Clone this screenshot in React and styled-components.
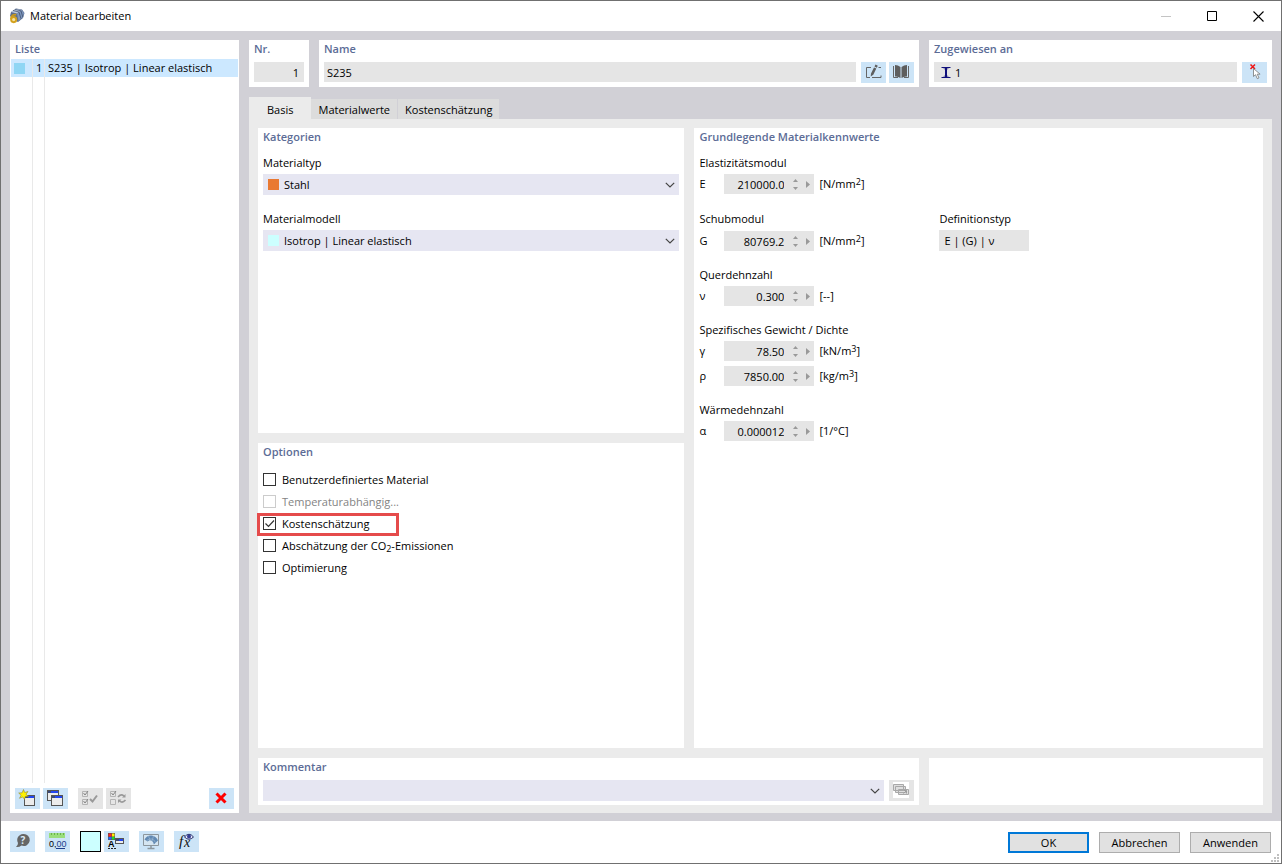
import { useState } from "react";
import styled, { createGlobalStyle, css } from "styled-components";

const GlobalStyle = createGlobalStyle`
  *, *::after {
    box-sizing: border-box;
  }

  body {
    margin: 0;
    font-family: "Open Sans", "Noto Sans", sans-serif;
    font-size: 11px;
    line-height: 16px;
    color: #000;
  }

  button, input, select {
    margin: 0;
    padding: 0;
    border: 0;
    border-radius: 0;
    background: none;
    color: inherit;
    font: inherit;
  }
`;

const Window = styled.div`
  position: relative;
  display: flex;
  flex-direction: column;
  min-height: 100vh;
  border: 1px solid #707070;
  background: #fff;
`;

const TitleBar = styled.header`
  display: flex;
  align-items: center;
  gap: 5px;
  height: 30px;
  padding-left: 8px;
`;

const Title = styled.h1`
  flex: 1;
  margin: 0;
  font-size: 11px;
  font-weight: 400;
`;

const WindowButtons = styled.div`
  display: flex;
`;

const WindowButton = styled.button`
  display: flex;
  align-items: center;
  justify-content: center;
  width: 46px;
  height: 30px;
`;

const Body = styled.div`
  flex: 1;
  display: flex;
  gap: 10px;
  padding: 9px 9px 8px;
  background: #d1d0d6;
`;

const Heading = styled.h2`
  margin: 0;
  font-size: 11px;
  font-weight: 600;
  line-height: 18px;
  color: #5c6c96;
`;

const ListPanel = styled.aside`
  display: flex;
  flex-direction: column;
  flex: 0 0 229px;
  padding-bottom: 4px;
  background: #fff;

  ${Heading} {
    padding: 0 5px;
  }
`;

const List = styled.div`
  flex: 1;
  display: flex;
  flex-direction: column;
  margin: 1px 1px 5px;
`;

const ListRow = styled.div`
  display: grid;
  grid-template-columns: 22px 12px 1fr;
  min-height: 18px;
  background: ${(p) => (p.$selected ? "#cce8ff" : "transparent")};
  ${(p) => p.$fill && "flex: 1;"}
`;

const ListCell = styled.div`
  display: flex;
  align-items: center;
  padding-left: 3px;
  line-height: 18px;

  &:not(:last-child) {
    border-right: 1px solid #e9e9e9;
  }
`;

const Swatch = styled.span`
  flex: none;
  width: 11px;
  height: 11px;
  background: ${(p) => p.$color};
`;

const ListTools = styled.div`
  display: flex;
  gap: 3px;
  padding: 0 5px;
`;

const ToolGroup = styled.div`
  display: flex;
  gap: 3px;
  margin-right: 7px;

  &:last-child {
    margin: 0 0 0 auto;
  }
`;

const ToolButton = styled.button`
  flex: none;
  width: 25px;
  height: 21px;
  background: #cce4f7;

  &:disabled {
    background: #e5e5e5;
  }

  svg {
    display: block;
  }
`;

const Main = styled.main`
  flex: 1;
  display: flex;
  flex-direction: column;
  min-width: 0;
`;

const TopRow = styled.div`
  display: grid;
  grid-template-columns: 60px 1fr 343px;
  gap: 10px;
  margin-bottom: 10px;
`;

const Card = styled.section`
  padding: 0 5px 4px;
  background: #fff;
`;

const CardLine = styled.div`
  display: flex;
  align-items: flex-start;
  gap: 5px;
  min-height: 21px;
  margin-top: 4px;
`;

const ButtonPair = styled.div`
  display: flex;
  gap: 3px;
`;

const TextField = styled.div`
  flex: 1;
  display: flex;
  align-items: center;
  gap: 4px;
  min-width: 0;
  height: 20px;
  padding: 0 ${(p) => p.$pad || 3}px;
  background: #e5e5e5;

  input {
    flex: 1;
    min-width: 0;
    height: 20px;
    padding-top: 1px;
    text-align: ${(p) => p.$align || "left"};
  }
`;

const Tabs = styled.div`
  display: flex;
  align-items: flex-end;
  height: 22px;
`;

const Tab = styled.button`
  height: 20px;
  padding: 2px 7px 0;
  background: #dcdcdc;
  line-height: 18px;

  & + & {
    border-right: 1px solid #d1d0d6;
  }

  ${(p) =>
    p.$active &&
    css`
      height: 22px;
      padding: 4px 18px 0;
      background: #ebebeb;
    `}
`;

const TabPage = styled.div`
  flex: 1;
  display: flex;
  flex-direction: column;
  gap: 10px;
  padding: 9px 9px 8px;
  background: #ebebeb;
`;

const Columns = styled.div`
  flex: 1;
  display: grid;
  grid-template-columns: 3fr 4fr;
  gap: 10px;
`;

const LeftColumn = styled.div`
  display: grid;
  grid-template-rows: 1fr 1fr;
  gap: 10px;
  min-width: 0;
`;

const BottomRow = styled.div`
  display: grid;
  grid-template-columns: 1fr 334px;
  gap: 10px;
`;

const Groups = styled.div`
  display: flex;
  flex-direction: column;
  gap: 16px;
  margin-top: 9px;
`;

const Group = styled.div`
  min-width: 0;
`;

const GroupLabel = styled.label`
  display: block;
  margin-bottom: 3px;
`;

const SelectBox = styled.div`
  flex: 1;
  display: flex;
  align-items: center;
  gap: 5px;
  height: 21px;
  padding: 0 4px 0 5px;
  background: #e6e6f2;

  select {
    flex: 1;
    min-width: 0;
    height: 21px;
    appearance: none;
    outline: none;
  }

  svg {
    flex: none;
  }
`;

const SplitGroup = styled.div`
  display: grid;
  grid-template-columns: 240px 90px;
`;

const TypeField = styled.input`
  display: block;
  width: 90px;
  height: 21px;
  padding: 0 5px;
  background: #e5e5e5;
`;

const ValueRows = styled.div`
  display: flex;
  flex-direction: column;
  gap: 5px;
`;

const ValueRow = styled.div`
  display: grid;
  grid-template-columns: 25px 90px 1fr;
  align-items: ${(p) => p.$align || "end"};
  min-height: ${(p) => (p.$tall ? 21 : 20)}px;
  line-height: 20px;
`;

const ValueBox = styled.div`
  display: flex;
  height: 20px;
  background: #e5e5e5;

  input {
    flex: 1;
    min-width: 0;
    padding-top: 2px;
    text-align: right;
  }
`;

const Spinner = styled.div`
  display: flex;
  flex-direction: column;
  justify-content: center;
  gap: 5px;
  width: 13px;
  margin-left: 5px;
`;

const ArrowButton = styled.button`
  display: flex;
  align-items: center;
  justify-content: center;
`;

const MoreButton = styled(ArrowButton)`
  width: 12px;
`;

const Unit = styled.span`
  padding-left: 5px;
  white-space: nowrap;

  sup {
    font-size: 9px;
    line-height: 0;
    vertical-align: 3px;
  }
`;

const Options = styled.div`
  display: flex;
  flex-direction: column;
  align-items: flex-start;
  margin-top: 8px;
`;

const Option = styled.label`
  position: relative;
  display: flex;
  align-items: center;
  gap: 6px;
  height: 22px;
  padding-bottom: 1px;
  color: ${(p) => (p.$disabled ? "#838383" : "#000")};

  sub {
    font-size: 9px;
    line-height: 0;
    vertical-align: -2px;
  }

  ${(p) =>
    p.$marked &&
    css`
      &::after {
        content: "";
        position: absolute;
        top: 0;
        left: -6px;
        width: 142px;
        height: 23px;
        border: 3px solid #e54b4b;
        pointer-events: none;
      }
    `}
`;

const CheckSlot = styled.span`
  display: grid;

  > * {
    grid-area: 1 / 1;
  }

  svg {
    pointer-events: none;
  }
`;

const CheckInput = styled.input`
  width: 13px;
  height: 13px;
  appearance: none;
  border: 1px solid #333;
  background: #fff;

  &:disabled {
    border-color: #ccc;
  }
`;

const Footer = styled.footer`
  display: flex;
  align-items: flex-start;
  gap: 10px;
  height: 42px;
  padding: 10px 10px 0 9px;
`;

const ColorButton = styled.button`
  width: 21px;
  height: 21px;
  border: 1px solid #000;
  background: #ccffff;
`;

const Actions = styled.div`
  display: flex;
  gap: 10px;
  margin: 1px 0 0 auto;
`;

const ActionButton = styled.button`
  width: 81px;
  height: 21px;
  border: ${(p) => (p.$primary ? "2px solid #0078d7" : "1px solid #adadad")};
  background: #e1e1e1;
`;

const Grip = styled.svg`
  position: absolute;
  right: 2px;
  bottom: 1px;
`;

function AppIcon() {
  return (
    <svg width="16" height="16" viewBox="0 0 16 16">
      <path d="M2 4 7 0.5 13 1.5 15.5 5 14 10 9 14 5 12 1 8Z" fill="#5a6d90" />
      <path d="M2 4 7 .8 12.5 2 8 5.5Z" fill="#bccbe2" />
      <path d="M8 5.5 12.5 2 15 5 13.5 9.5 9.5 13Z" fill="#7f97be" />
      <path d="M4 2.5 10 4M6 1.3l6 1.6M10 4.2l2 6.5M12 3l1.8 6" stroke="#34435f" fill="none" strokeWidth=".7" />
      <path d="M7.300 6.600Q2.200 6 2 11" stroke="#c99a1c" strokeWidth="1.800" fill="none" />
      <circle cx="4.700" cy="11.600" r="2.600" fill="#f3e3a4" stroke="#d3a11d" strokeWidth="1.900" />
    </svg>
  );
}

function Icon({ children }) {
  return (
    <svg width="25" height="21" viewBox="0 0 25 21" fill="none">
      {children}
    </svg>
  );
}

function MiniWindow({ x, y, w = 11, h = 10 }) {
  return (
    <>
      <rect x={x + 0.5} y={y + 0.5} width={w - 1} height={h - 1} fill="#ececec" stroke="#555" />
      <rect x={x + 1} y={y + 1} width={w - 2} height="2" fill="#3a4a78" />
      <rect x={x + 4} y={y + 1} width={w - 5} height="2" fill="#2346f0" />
    </>
  );
}

const NewIcon = () => (
  <Icon>
    <MiniWindow x={9} y={7} w={11} h={11} />
    <path
      d="m8.500 1.500 1.200 3 3.300-1-2 2.800 2.500 2-3.200.1-.8 3-1.800-2.500-3.200 1.400 1.600-3L3.700 5l3.400-.2Z"
      fill="#fff200"
      stroke="#8c8636"
      strokeWidth=".6"
    />
  </Icon>
);

const CopyIcon = () => (
  <Icon>
    <MiniWindow x={4} y={2} w={12} h={11} />
    <MiniWindow x={8} y={7} w={12} h={11} />
  </Icon>
);

const CheckAllIcon = () => (
  <Icon>
    <path d="M4.500 3.500h5v5h-5zM4.500 11.500h5v5h-5z" stroke="#b4b4b4" />
    <path d="m5.500 5 1.500 2 3-4M5.500 13l1.500 2 3-4" stroke="#858585" />
    <path d="m12 11 2.500 2.500 4.500-6" stroke="#999" strokeWidth="2" />
  </Icon>
);

const SwapIcon = () => (
  <Icon>
    <path d="M4.500 3.500h5v5h-5zM4.500 11.500h5v5h-5z" stroke="#b4b4b4" />
    <path d="m5.500 5 1.500 2 3-4" stroke="#858585" />
    <path d="M12 9q3-3.500 6-1M19.500 12q-3 3.500-6 1" stroke="#999" strokeWidth="1.600" />
    <path d="M19.500 6v3.500H16zM12 15v-3.500h3.500z" fill="#999" />
  </Icon>
);

const DeleteIcon = () => (
  <Icon>
    <path d="m7.500 5.500 9 9M16.500 5.500l-9 9" stroke="#f00" strokeWidth="3" />
  </Icon>
);

const HelpIcon = () => (
  <Icon>
    <path d="M13 3a6 6 0 1 1-1.500 11.500Q9 16.500 6 16q2-1.500 2-4A6 6 0 0 1 13 3Z" fill="#666" />
    <text x="13" y="13" textAnchor="middle" fontSize="10" fontWeight="700" fill="#dcecf8">?</text>
  </Icon>
);

const UnitsIcon = () => (
  <Icon>
    <path d="M4 2h16v5H4z" fill="#9ade7c" />
    <path d="M6.500 2v2M9.500 2v2M12.500 2v2M15.500 2v2M18.500 2v2" stroke="#69b34b" />
    <text x="4" y="16" fontFamily="Liberation Sans" fontSize="9" fill="#000">
      0,<tspan fill="#1d3e8a">00</tspan>
    </text>
    <path d="M11 17.500h9" stroke="#1d3e8a" />
  </Icon>
);

const DisplayIcon = () => (
  <Icon>
    <path d="M4 2h7v7H4z" fill="#555" />
    <path d="M4.500 2.500h3v3h-3z" fill="#f22" />
    <path d="M8 2.500h2.500v3H8z" fill="#fe0" />
    <path d="M4.500 6h3v2.500h-3z" fill="#26f" />
    <path d="M8 6h2.500v2.500H8z" fill="#2d2" />
    <text x="4" y="16" fontFamily="Liberation Sans" fontSize="9" fontWeight="700" fill="#000">A</text>
    <path d="M4 17.500h8" stroke="#222" strokeDasharray="2 1" />
    <MiniWindow x={11} y={7} w={9} h={6} />
  </Icon>
);

const MonitorIcon = () => (
  <Icon>
    <path d="M4.500 3.500h15v11h-15z" fill="#d5e5f1" stroke="#8c969d" />
    <path d="M12 15v2.500M8.500 17.500h7" stroke="#8c969d" strokeWidth="1.500" />
    <path d="M5.500 8.500Q8 4 12.500 4.500T19 9.500L14.800 13.500Q14.500 9.500 10.500 9.300L8.500 10.500Z" fill="#6189b3" />
    <path d="M7.500 9.500Q14 5.500 16.500 11.500M9.500 5l1.500 4M14.500 5l-1.500 5" stroke="#a4bfd9" strokeWidth=".6" />
  </Icon>
);

const FormulaIcon = () => (
  <Icon>
    <text x="5" y="15" fontFamily="Liberation Serif" fontStyle="italic" fontSize="15" fill="#111">
      f
    </text>
    <text x="10" y="16" fontFamily="Liberation Serif" fontStyle="italic" fontSize="14" fill="#111">
      x
    </text>
    <path d="M10.500 6q4.500-5.500 9 0-4.500 4.500-9 0Z" fill="#e4e6fa" stroke="#292f68" />
    <circle cx="15" cy="5.500" r="2" fill="#343d94" />
  </Icon>
);

const EditIcon = () => (
  <Icon>
    <path d="M10 5.500H5.500v10H9M11 15.500h9v-2M17.500 5.500H20" stroke="#666" />
    <path d="m14.500 2.500 2.300 1.200-1 2-2.300-1.200ZM13 5.400l2.300 1.200-3 6.200-2.600 1.700.3-3Z" fill="#5e5e5e" />
  </Icon>
);

const BookIcon = () => (
  <Icon>
    <path d="M6 3q3 0 5.500 2v11q-3-2-5.500-1.500ZM18 3q-3 0-5.500 2v11q3-2 5.500-1.500Z" fill="#5e5e5e" />
    <path d="M4.500 4v11.500H9M19.500 4v11.500H15" stroke="#666" />
  </Icon>
);

const PickIcon = () => (
  <Icon>
    <path d="m8.500 2.500 4.500 4.500M13 2.500 8.500 7" stroke="#f01414" strokeWidth="1.500" />
    <path d="M11.500 6.500v8l2-1.800 1.800 4 1.700-.8-1.800-3.700h2.900Z" fill="#fff" stroke="#777" strokeWidth=".8" />
  </Icon>
);

const CommentsIcon = () => (
  <Icon>
    <path d="M4 2h16v16H4z" fill="#fff" />
    <g fill="#dedede" stroke="#a8a8a8">
      <path d="M4.500 4.500h10v6h-10zM6.500 6.500h10v6h-10zM9.500 9.500h10v5h-10z" />
    </g>
    <path d="m14.500 13.500 3-3M17.500 13.500v-3h-3" stroke="#9d9d9d" />
  </Icon>
);

const Chevron = () => (
  <svg width="10" height="6" viewBox="0 0 10 6" fill="none">
    <path d="m.8.8 4.200 4.200L9.200.8" stroke="#444" strokeWidth="1.200" />
  </svg>
);

const BeamIcon = () => (
  <svg width="10" height="11" viewBox="0 0 10 11" fill="none">
    <path d="M.5.500h9M.5 10.500h9" stroke="#10107c" />
    <path d="M2 1h6L6 3v5l2 2H2l2-2V3Z" fill="#8d8db0" />
    <path d="M5 1v9" stroke="#10107c" strokeWidth="2" />
  </svg>
);

function ValueInput({ id, symbol, value, unit, power, tall, align }) {
  const [text, setText] = useState(value);

  return (
    <ValueRow $tall={tall} $align={align}>
      <label htmlFor={id}>{symbol}</label>
      <ValueBox>
        <input id={id} value={text} onChange={(e) => setText(e.target.value)} />
        <Spinner>
          <ArrowButton type="button" aria-label="+">
            <svg width="5" height="3" viewBox="0 0 5 3">
              <path d="M0 3 2.500 0 5 3Z" fill="#999" />
            </svg>
          </ArrowButton>
          <ArrowButton type="button" aria-label="-">
            <svg width="5" height="3" viewBox="0 0 5 3">
              <path d="M0 0h5L2.500 3Z" fill="#999" />
            </svg>
          </ArrowButton>
        </Spinner>
        <MoreButton type="button" aria-label={symbol}>
          <svg width="4" height="7" viewBox="0 0 4 7">
            <path d="M0 0 4 3.500 0 7Z" fill="#999" />
          </svg>
        </MoreButton>
      </ValueBox>
      <Unit>
        [{unit}
        {power && <sup>{power}</sup>}]
      </Unit>
    </ValueRow>
  );
}

function SelectField({ id, label, color, value }) {
  return (
    <Group>
      <GroupLabel htmlFor={id}>{label}</GroupLabel>
      <SelectBox>
        <Swatch $color={color} />
        <select id={id}>
          <option>{value}</option>
        </select>
        <Chevron />
      </SelectBox>
    </Group>
  );
}

const OPTIONS = [
  { id: "custom", label: "Benutzerdefiniertes Material" },
  { id: "temperature", label: "Temperaturabhängig...", disabled: true },
  { id: "costs", label: "Kostenschätzung", marked: true },
  {
    id: "co2",
    label: (
      <>
        Abschätzung der CO<sub>2</sub>-Emissionen
      </>
    ),
  },
  { id: "optimize", label: "Optimierung" },
];

const TABS = ["Basis", "Materialwerte", "Kostenschätzung"];

export default function App() {
  const [tab, setTab] = useState("Basis");
  const [checked, setChecked] = useState({ costs: true });
  const [name, setName] = useState("S235");
  const [number, setNumber] = useState("1");
  const [assigned, setAssigned] = useState("1");

  const toggle = (id) => setChecked((c) => ({ ...c, [id]: !c[id] }));

  return (
    <>
      <GlobalStyle />
      <Window>
        <TitleBar>
          <AppIcon />
          <Title>Material bearbeiten</Title>
          <WindowButtons>
            <WindowButton type="button" aria-label="Minimieren" disabled>
              <svg width="11" height="11" viewBox="0 0 11 11">
                <path d="M0 5.500h10" stroke="#c4c4c4" />
              </svg>
            </WindowButton>
            <WindowButton type="button" aria-label="Maximieren">
              <svg width="11" height="11" viewBox="0 0 11 11" fill="none">
                <path d="M.5.500h9v9h-9z" stroke="#000" />
              </svg>
            </WindowButton>
            <WindowButton type="button" aria-label="Schließen">
              <svg width="11" height="11" viewBox="0 0 11 11">
                <path d="m.5.500 10 10M10.500.500l-10 10" stroke="#000" strokeWidth="1.100" />
              </svg>
            </WindowButton>
          </WindowButtons>
        </TitleBar>

        <Body>
          <ListPanel>
            <Heading>Liste</Heading>
            <List>
              <ListRow $selected>
                <ListCell>
                  <Swatch $color="#8fd6f4" />
                </ListCell>
                <ListCell>1</ListCell>
                <ListCell>S235 | Isotrop | Linear elastisch</ListCell>
              </ListRow>
              <ListRow $fill>
                <ListCell />
                <ListCell />
                <ListCell />
              </ListRow>
            </List>
            <ListTools>
              <ToolGroup>
                <ToolButton type="button" aria-label="Neu"><NewIcon /></ToolButton>
                <ToolButton type="button" aria-label="Kopieren"><CopyIcon /></ToolButton>
              </ToolGroup>
              <ToolGroup>
                <ToolButton type="button" aria-label="Alle auswählen" disabled><CheckAllIcon /></ToolButton>
                <ToolButton type="button" aria-label="Auswahl umkehren" disabled><SwapIcon /></ToolButton>
              </ToolGroup>
              <ToolGroup>
                <ToolButton type="button" aria-label="Löschen"><DeleteIcon /></ToolButton>
              </ToolGroup>
            </ListTools>
          </ListPanel>

          <Main>
            <TopRow>
              <Card>
                <Heading as="label" htmlFor="number">Nr.</Heading>
                <CardLine>
                  <TextField $align="right" $pad={5}>
                    <input id="number" value={number} onChange={(e) => setNumber(e.target.value)} />
                  </TextField>
                </CardLine>
              </Card>
              <Card>
                <Heading as="label" htmlFor="name">Name</Heading>
                <CardLine>
                  <TextField>
                    <input id="name" value={name} onChange={(e) => setName(e.target.value)} />
                  </TextField>
                  <ButtonPair>
                    <ToolButton type="button" aria-label="Bearbeiten"><EditIcon /></ToolButton>
                    <ToolButton type="button" aria-label="Bibliothek"><BookIcon /></ToolButton>
                  </ButtonPair>
                </CardLine>
              </Card>
              <Card>
                <Heading as="label" htmlFor="assigned">Zugewiesen an</Heading>
                <CardLine>
                  <TextField $pad={7}>
                    <BeamIcon />
                    <input id="assigned" value={assigned} onChange={(e) => setAssigned(e.target.value)} />
                  </TextField>
                  <ToolButton type="button" aria-label="Auswählen"><PickIcon /></ToolButton>
                </CardLine>
              </Card>
            </TopRow>

            <Tabs role="tablist">
              {TABS.map((t) => (
                <Tab
                  key={t}
                  type="button"
                  role="tab"
                  aria-selected={t === tab}
                  $active={t === tab}
                  onClick={() => setTab(t)}
                >
                  {t}
                </Tab>
              ))}
            </Tabs>

            <TabPage>
              <Columns>
                <LeftColumn>
                  <Card>
                    <Heading>Kategorien</Heading>
                    <Groups>
                      <SelectField id="type" label="Materialtyp" color="#e97932" value="Stahl" />
                      <SelectField
                        id="model"
                        label="Materialmodell"
                        color="#ccffff"
                        value="Isotrop | Linear elastisch"
                      />
                    </Groups>
                  </Card>
                  <Card>
                    <Heading>Optionen</Heading>
                    <Options>
                      {OPTIONS.map((o) => (
                        <Option key={o.id} $disabled={o.disabled} $marked={o.marked}>
                          <CheckSlot>
                            <CheckInput
                              type="checkbox"
                              disabled={o.disabled}
                              checked={!!checked[o.id]}
                              onChange={() => toggle(o.id)}
                            />
                            {checked[o.id] && (
                              <svg width="13" height="13" viewBox="0 0 13 13" fill="none">
                                <path d="m2.500 6.500 3 3 5.500-6" stroke="#333" strokeWidth="1.200" />
                              </svg>
                            )}
                          </CheckSlot>
                          <span>{o.label}</span>
                        </Option>
                      ))}
                    </Options>
                  </Card>
                </LeftColumn>

                <Card>
                  <Heading>Grundlegende Materialkennwerte</Heading>
                  <Groups>
                    <Group>
                      <GroupLabel as="div">Elastizitätsmodul</GroupLabel>
                      <ValueInput id="e" symbol="E" value="210000.0" unit="N/mm" power="2" tall align="start" />
                    </Group>
                    <SplitGroup>
                      <Group>
                        <GroupLabel as="div">Schubmodul</GroupLabel>
                        <ValueInput id="g" symbol="G" value="80769.2" unit="N/mm" power="2" tall />
                      </Group>
                      <Group>
                        <GroupLabel htmlFor="definition">Definitionstyp</GroupLabel>
                        <TypeField id="definition" value="E | (G) | ν" readOnly />
                      </Group>
                    </SplitGroup>
                    <Group>
                      <GroupLabel as="div">Querdehnzahl</GroupLabel>
                      <ValueInput id="nu" symbol="ν" value="0.300" unit="--" />
                    </Group>
                    <Group>
                      <GroupLabel as="div">Spezifisches Gewicht / Dichte</GroupLabel>
                      <ValueRows>
                        <ValueInput id="gamma" symbol="γ" value="78.50" unit="kN/m" power="3" />
                        <ValueInput id="rho" symbol="ρ" value="7850.00" unit="kg/m" power="3" />
                      </ValueRows>
                    </Group>
                    <Group>
                      <GroupLabel as="div">Wärmedehnzahl</GroupLabel>
                      <ValueInput id="alpha" symbol="α" value="0.000012" unit="1/°C" />
                    </Group>
                  </Groups>
                </Card>
              </Columns>

              <BottomRow>
                <Card>
                  <Heading as="label" htmlFor="comment">Kommentar</Heading>
                  <CardLine>
                    <SelectBox>
                      <select id="comment">
                        <option></option>
                      </select>
                      <Chevron />
                    </SelectBox>
                    <ToolButton type="button" aria-label="Kommentare" disabled><CommentsIcon /></ToolButton>
                  </CardLine>
                </Card>
                <Card />
              </BottomRow>
            </TabPage>
          </Main>
        </Body>

        <Footer>
          <ToolButton type="button" aria-label="Hilfe"><HelpIcon /></ToolButton>
          <ToolButton type="button" aria-label="Einheiten"><UnitsIcon /></ToolButton>
          <ButtonPair>
            <ColorButton type="button" aria-label="Farbe" />
            <ToolButton type="button" aria-label="Anzeige"><DisplayIcon /></ToolButton>
          </ButtonPair>
          <ToolButton type="button" aria-label="Vorschau"><MonitorIcon /></ToolButton>
          <ToolButton type="button" aria-label="Formel"><FormulaIcon /></ToolButton>
          <Actions>
            <ActionButton type="button" $primary>OK</ActionButton>
            <ActionButton type="button">Abbrechen</ActionButton>
            <ActionButton type="button">Anwenden</ActionButton>
          </Actions>
        </Footer>

        <Grip width="8" height="8" viewBox="0 0 8 8" fill="#bfbfbf">
          <path d="M6 0h2v2H6zM3 3h2v2H3zM6 3h2v2H6zM0 6h2v2H0zM3 6h2v2H3zM6 6h2v2H6z" />
        </Grip>
      </Window>
    </>
  );
}
